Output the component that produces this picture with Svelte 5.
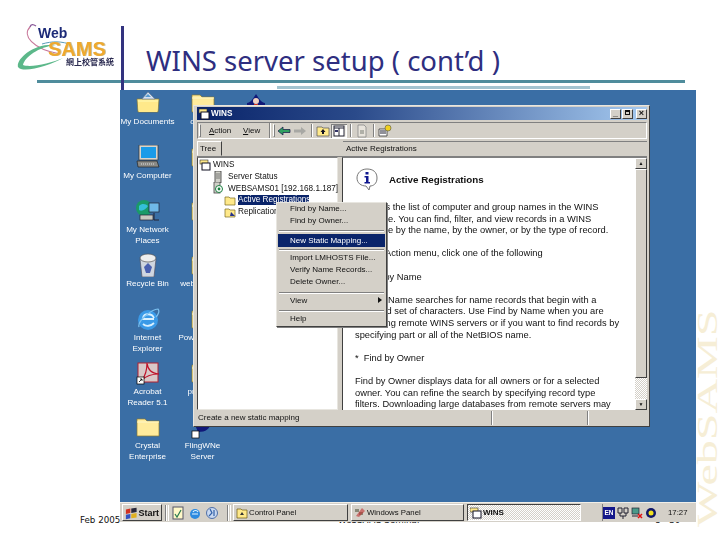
<script lang="ts">
  const columnOne = [
    { icon: 'docs', label: ['My Documents'] },
    { icon: 'computer', label: ['My Computer'] },
    { icon: 'network', label: ['My Network', 'Places'] },
    { icon: 'recycle', label: ['Recycle Bin'] },
    { icon: 'ie', label: ['Internet', 'Explorer'] },
    { icon: 'acrobat', label: ['Acrobat', 'Reader 5.1'] },
    { icon: 'folder', label: ['Crystal', 'Enterprise'] },
  ];
  const columnTwo = [
    { icon: 'folder', label: ['drivers'] },
    { icon: 'folder', label: ['Tools'] },
    { icon: 'folder', label: ['SQL'] },
    { icon: 'folder', label: ['webservices'] },
    { icon: 'folder', label: ['PowerBuilder'] },
    { icon: 'folder', label: ['program'] },
    { icon: 'fling', label: ['FlingWNe', 'Server'] },
  ];

  const bodyLines = [
    'Displays the list of computer and group names in the WINS',
    'database. You can find, filter, and view records in a WINS',
    'database by the name, by the owner, or by the type of record.',
    '',
    'On the Action menu, click one of the following',
    '',
    '*\u00A0\u00A0Find by Name',
    '',
    'Find by Name searches for name records that begin with a',
    'specified set of characters. Use Find by Name when you are',
    'managing remote WINS servers or if you want to find records by',
    'specifying part or all of the NetBIOS name.',
    '',
    '*\u00A0\u00A0Find by Owner',
    '',
    'Find by Owner displays data for all owners or for a selected',
    'owner. You can refine the search by specifying record type',
    'filters. Downloading large databases from remote servers may',
  ];
</script>

{#snippet deskIcon(kind: string)}
  <svg class="desk-svg" viewBox="0 0 24 24" width="24" height="24">
    {#if kind === 'docs'}
      <path d="M1 8h22l-1 13H2z" fill="#fff2a0" stroke="#8a7a30" stroke-width=".7" />
      <path d="M6 8l6-7 7 7z" fill="#d5e2f2" stroke="#6a7a90" stroke-width=".6" />
      <path d="M9 6l3-3 3 3z" fill="#5a9ad0" />
      <path d="M2 11h20l-1 10H3z" fill="#ffe98a" />
    {:else if kind === 'computer'}
      <rect x="3" y="0" width="19" height="15" fill="#d8d4cc" stroke="#333" stroke-width=".7" />
      <rect x="5" y="2" width="15" height="11" fill="#1a9be8" />
      <path d="M1 16h20l2 6H2z" fill="#8a8a86" stroke="#222" stroke-width=".7" />
      <path d="M5 19h13" stroke="#ddd" stroke-width="1.200" stroke-dasharray="1 1" />
    {:else if kind === 'network'}
      <circle cx="8" cy="9" r="8" fill="#1a9a68" />
      <path d="M3 7c3-3 7-2 9 0-2 3-6 6-9 4z" fill="#35c0d8" />
      <rect x="13" y="4" width="10" height="9" fill="#6fb8e8" stroke="#223" stroke-width=".7" />
      <rect x="4" y="16" width="13" height="5" fill="#c8c8c0" stroke="#223" stroke-width=".7" />
      <path d="M18 14v7h5" fill="none" stroke="#223" />
    {:else if kind === 'recycle'}
      <path d="M4 6h16l-2 18H6z" fill="#cfd6e0" stroke="#556" stroke-width=".7" />
      <ellipse cx="12" cy="5" rx="8" ry="4" fill="#eee" stroke="#555" stroke-width=".7" />
      <path d="M8 14l4-4 4 4-2 6h-4z" fill="#4a60b0" />
    {:else if kind === 'ie'}
      <circle cx="12" cy="13" r="10" fill="#3a9ae8" />
      <path d="M6 12h12M7 17c3 3 8 2 11-1M7 11c1-5 9-5 11 0" fill="none" stroke="#d8f0ff" stroke-width="1.800" />
      <path d="M3 20C1 14 16 2 22 2c2 2 0 6-2 8" fill="none" stroke="#7ac0f0" stroke-width="1.200" />
    {:else if kind === 'acrobat'}
      <rect x="2" y="2" width="20" height="19" fill="#d8c8c8" stroke="#b02030" />
      <path d="M6 19c3-4 5-10 5-17 1 7 4 10 12 11-7 0-13 2-17 6z" fill="none" stroke="#c01028" stroke-width="1.200" />
      <rect x="1" y="16" width="7" height="7" fill="#fff" stroke="#000" stroke-width=".7" />
      <path d="M3 21l3-3M4 18h2v2" stroke="#000" fill="none" stroke-width=".8" />
    {:else if kind === 'fling'}
      <path d="M4 10c3 0 5-3 7-5l10 1c-2 8-6 11-14 11z" fill="#101878" />
      <circle cx="13" cy="6" r="3" fill="#e07018" />
      <rect x="1" y="16" width="7" height="7" fill="#fff" stroke="#000" stroke-width=".7" />
    {:else}
      <path d="M1 4h8l2 2h12v15H1z" fill="#ffeb9c" stroke="#8a7a30" stroke-width=".7" />
      <path d="M1 7h22" stroke="#fff7c8" />
    {/if}
  </svg>
{/snippet}

{#snippet winsIcon()}
  <svg viewBox="0 0 12 12" width="12" height="12">
    <rect x="1" y="1" width="8" height="4" fill="#ffe98a" stroke="#333" stroke-width=".6" />
    <rect x="3" y="4" width="8" height="7" fill="#fff" stroke="#112" />
  </svg>
{/snippet}

<div class="slide">
  <header class="head">
    <svg class="logo" viewBox="0 0 120 80" width="120" height="80">
      <path d="M30 27c-8 8 2 22 30 27" fill="none" stroke="#c8789a" stroke-width="1.2" />
      <path d="M30 27c1-3 3-3 6-1" fill="none" stroke="#8a5a9a" stroke-width="1.4" />
      <path d="M18 67c-2-7 14-24 38-22-18 2-31 12-33 20 8 3 28-2 40-7-12 7-40 16-45 9z" fill="#5cb88a" />
      <path d="M42 44c10-3 20-3 30 1" fill="none" stroke="#5a9ab8" stroke-width="1" />
      <text class="logo-web" x="38" y="38">Web</text>
      <text class="logo-sams-shadow" x="49" y="56">SAMS</text>
      <text class="logo-sams" x="48" y="55.500">SAMS</text>
      <text class="logo-zh" x="66" y="64.500">網上校管系統</text>
    </svg>
    <h1>WINS server setup ( cont’d )</h1>
  </header>
  <div class="rule"></div>
  <div class="rule-light"></div>
  <div class="head-bar"></div>

  <main class="desktop">
    <div class="icons">
      <div class="icon-col">
        {#each columnOne as item}
          <div class="desk-icon">
            {@render deskIcon(item.icon)}
            <span class="desk-label">{#each item.label as line}<span>{line}</span>{/each}</span>
          </div>
        {/each}
      </div>
      <div class="icon-col">
        {#each columnTwo as item}
          <div class="desk-icon">
            {@render deskIcon(item.icon)}
            <span class="desk-label">{#each item.label as line}<span>{line}</span>{/each}</span>
          </div>
        {/each}
      </div>
      <div class="icon-col third">
        <div class="desk-icon">
          <svg class="desk-svg" viewBox="0 0 24 24" width="24" height="24">
            <path d="M3 12c3 0 6-4 9-9 3 5 6 9 9 9v4H3z" fill="#101878" />
            <circle cx="12" cy="10" r="3" fill="#f0d0c0" />
            <path d="M10 13h4v3h-4z" fill="#d03020" />
          </svg>
        </div>
      </div>
    </div>

    <section class="window">
      <div class="titlebar">
        {@render winsIcon()}
        <span class="title-text">WINS</span>
        <div class="caption-btns">
          <span class="cap-btn">_</span>
          <span class="cap-btn square"></span>
          <span class="cap-btn close">×</span>
        </div>
      </div>

      <div class="toolbar">
        <div class="grip"></div>
        <span class="menu-item action"><u>A</u>ction</span>
        <span class="menu-item"><u>V</u>iew</span>
        <div class="band-sep"></div>
        <div class="grip second"></div>
        <svg class="tool" viewBox="0 0 14 14" width="14" height="14">
          <path d="M1 7l5-4v2.500h7v3H6V11z" fill="#2fa060" stroke="#114" stroke-width=".7" />
        </svg>
        <svg class="tool" viewBox="0 0 14 14" width="14" height="14">
          <path d="M13 7L8 3v2.500H1v3h7V11z" fill="#a8a8a4" />
        </svg>
        <div class="tool-sep"></div>
        <svg class="tool" viewBox="0 0 14 14" width="14" height="14">
          <path d="M1 3h5l1 1h6v8H1z" fill="#ffe98a" stroke="#555" stroke-width=".7" />
          <path d="M7 5l2.500 3H8v2H6V8H4.500z" fill="#112" />
        </svg>
        <svg class="tool pressed" viewBox="0 0 14 14" width="14" height="14">
          <rect x="2" y="2" width="10" height="10" fill="#fff" stroke="#223" />
          <path d="M2 4h10M7 4v8" stroke="#223" />
          <path d="M3 6h3v2H3z" fill="#336" />
        </svg>
        <div class="tool-sep"></div>
        <svg class="tool" viewBox="0 0 14 14" width="14" height="14">
          <path d="M3 1h6l2 2v10H3z" fill="#e8e4dc" stroke="#888" stroke-width=".8" />
          <path d="M5 6h4v4H5z" fill="#b0b0a8" />
        </svg>
        <div class="tool-sep"></div>
        <svg class="tool" viewBox="0 0 14 14" width="14" height="14">
          <path d="M1 5h8v7H1z" fill="#fff" stroke="#333" stroke-width=".8" />
          <path d="M2 7h6M2 9h6" stroke="#223" />
          <circle cx="10" cy="4" r="3" fill="#f0d020" stroke="#554" stroke-width=".6" />
        </svg>
      </div>

      <div class="tabs">
        <div class="tree-tab"><span>Tree</span></div>
        <div class="list-tab">Active Registrations</div>
      </div>

      <div class="panes">
        <div class="tree">
          <div class="tree-row lvl0">
            {@render winsIcon()}
            <span>WINS</span>
          </div>
          <div class="tree-row lvl1">
            <svg viewBox="0 0 12 12" width="12" height="12">
              <rect x="3" y="0" width="6" height="12" fill="#d0d0c8" stroke="#333" stroke-width=".8" />
              <path d="M4 3h4M4 5h4M4 7h4" stroke="#555" stroke-width=".7" />
            </svg>
            <span>Server Status</span>
          </div>
          <div class="tree-row lvl1">
            <svg viewBox="0 0 12 12" width="12" height="12">
              <rect x="2" y="0" width="6" height="11" fill="#d0d0c8" stroke="#444" stroke-width=".8" />
              <circle cx="7" cy="7" r="3.500" fill="#fff" stroke="#1a8040" />
              <circle cx="7" cy="7" r="1.400" fill="#1a8040" />
            </svg>
            <span>WEBSAMS01 [192.168.1.187]</span>
          </div>
          <div class="tree-row lvl2">
            <svg viewBox="0 0 12 12" width="12" height="12">
              <path d="M1 3h4l1 1h5v7H1z" fill="#ffe98a" stroke="#7a6a20" stroke-width=".7" />
            </svg>
            <span class="selected">Active Registrations</span>
          </div>
          <div class="tree-row lvl2">
            <svg viewBox="0 0 12 12" width="12" height="12">
              <path d="M1 3h4l1 1h5v7H1z" fill="#ffe98a" stroke="#7a6a20" stroke-width=".7" />
              <path d="M7 6l4 4H6z" fill="#24308a" />
            </svg>
            <span>Replication</span>
          </div>
        </div>

        <div class="content">
          <div class="content-body">
            <div class="intro">
              <svg viewBox="0 0 24 24" width="24" height="24">
                <path d="M12 2c6 0 10 3 10 9s-4 8-7 8l-1 4-3-4C6 19 2 16 2 11s4-9 10-9z" fill="#fff" stroke="#777" />
                <rect x="10.500" y="5" width="3" height="2.500" fill="#101890" />
                <path d="M9.500 9h4v6h1.500v1.500H9.500V15H11v-4.500H9.500z" fill="#101890" />
              </svg>
              <h2>Active Registrations</h2>
            </div>
            <div class="copy">
              {#each bodyLines as line}
                <div class="copy-line">{line}</div>
              {/each}
            </div>
          </div>
          <div class="scrollbar">
            <span class="sb-btn">▲</span>
            <span class="sb-thumb"></span>
            <span class="sb-track"></span>
            <span class="sb-btn">▼</span>
          </div>
        </div>
      </div>

      <div class="statusbar">
        <span class="st-main">Create a new static mapping</span>
        <span class="st-mid"></span>
        <span class="st-end"></span>
      </div>

      <div class="context-menu">
        <div class="mi">Find by Name...</div>
        <div class="mi">Find by Owner...</div>
        <div class="m-sep first"></div>
        <div class="mi active">New Static Mapping...</div>
        <div class="m-sep"></div>
        <div class="mi">Import LMHOSTS File...</div>
        <div class="mi">Verify Name Records...</div>
        <div class="mi">Delete Owner...</div>
        <div class="m-sep"></div>
        <div class="mi arrow">View<span class="caret"></span></div>
        <div class="m-sep"></div>
        <div class="mi">Help</div>
      </div>
    </section>

    <footer class="taskbar">
      <button class="start" type="button">
        <svg viewBox="0 0 14 14" width="14" height="14">
          <path d="M1 3l5-1v5l-5 1z" fill="#d03020" />
          <path d="M7 2l6-1v5l-6 1z" fill="#28283a" />
          <path d="M1 9l5-1v5l-5 1z" fill="#3050c0" />
          <path d="M7 8l6-1v5l-6 1z" fill="#e0b020" />
        </svg>
        Start
      </button>
      <div class="task-sep"></div>
      <div class="quick">
        <svg viewBox="0 0 14 14" width="14" height="14">
          <rect x="2" y="1" width="10" height="12" fill="#fff8c8" stroke="#556" />
          <path d="M4 8l2 3 4-7" fill="none" stroke="#2a7a50" stroke-width="1.2" />
        </svg>
        <svg viewBox="0 0 14 14" width="14" height="14">
          <circle cx="7" cy="8" r="5" fill="#2c8ae0" />
          <path d="M4 8h6M5 6c1-2 4-2 5 0" fill="none" stroke="#e0f4ff" stroke-width="1.100" />
        </svg>
        <svg viewBox="0 0 14 14" width="14" height="14">
          <circle cx="7" cy="7" r="5.500" fill="#c8d8f0" stroke="#5070a8" />
          <path d="M5 3l2 4-3 3M9 4v6" fill="none" stroke="#3060a8" stroke-width="1.200" />
        </svg>
      </div>
      <div class="task-sep"></div>
      <button class="task cp" type="button">
        <svg viewBox="0 0 12 12" width="12" height="12">
          <path d="M1 2h4l1 1h5v8H1z" fill="#ffe98a" stroke="#6a5a10" stroke-width=".7" />
          <path d="M4 8l2-3 2 3z" fill="#333" />
        </svg>
        Control Panel
      </button>
      <button class="task wp" type="button">
        <svg viewBox="0 0 12 12" width="12" height="12">
          <path d="M1 2h4v3H1zM5 5h4v3H5z" fill="#887" />
          <path d="M8 1l3 3-6 6-3-1z" fill="#c03030" opacity=".6" />
        </svg>
        Windows Panel
      </button>
      <button class="task wins" type="button">
        <svg viewBox="0 0 12 12" width="12" height="12">
          <rect x="0" y="1" width="8" height="4" fill="#ffe98a" stroke="#333" stroke-width=".6" />
          <rect x="3" y="4" width="8" height="7" fill="#fff" stroke="#112" />
        </svg>
        WINS
      </button>
      <div class="tray">
        <span class="lang">EN</span>
        <svg viewBox="0 0 12 12" width="12" height="12">
          <path d="M1 1h4v5H1zM7 1h4v5H7zM3 6v3h6V6M6 9v3" fill="none" stroke="#223" />
        </svg>
        <svg viewBox="0 0 12 12" width="12" height="12">
          <rect x="1" y="1" width="7" height="6" fill="#4a9a8a" stroke="#223" stroke-width=".7" />
          <path d="M1 9h6" stroke="#223" />
          <path d="M7 7l4 4M11 7l-4 4" stroke="#e01010" stroke-width="1.500" />
        </svg>
        <svg viewBox="0 0 12 12" width="12" height="12">
          <circle cx="6" cy="6" r="5" fill="#101868" />
          <circle cx="6" cy="6" r="2.500" fill="#f0e020" />
        </svg>
        <span class="clock">17:27</span>
      </div>
    </footer>
  </main>

  <div class="slide-foot">
    <span class="date">Feb 2005</span>
    <span class="seminar">WebSAMS Seminar</span>
    <span class="page">8 - 30</span>
  </div>

  <div class="watermark">WebSAMS</div>
</div>

<style>
  :global(body) {
    margin: 0;
    background: #fff;
  }

  .slide {
    position: relative;
    width: 720px;
    height: 540px;
    overflow: hidden;
    background: #fff;
    font-family: "Liberation Sans", Arial, sans-serif;
  }

  .head {
    display: flex;
    height: 80px;
  }

  .logo {
    flex-shrink: 0;
    filter: blur(0.3px);
  }

  .logo-web {
    font: bold 14px "Liberation Sans", sans-serif;
    fill: #1c2a78;
  }

  .logo-sams {
    font: bold 20px "Liberation Sans", sans-serif;
    fill: #eea92e;
  }

  .logo-sams-shadow {
    font: bold 20px "Liberation Sans", sans-serif;
    fill: #c9c4a8;
  }

  .logo-zh {
    font: bold 8px "Noto Sans CJK TC", sans-serif;
    fill: #2a2a50;
  }

  h1 {
    margin: 46px 0 0 26px;
    font: 400 27.500px/30px "Noto Sans", sans-serif;
    color: #2e2e80;
    white-space: nowrap;
  }

  .rule {
    height: 3px;
    width: 648px;
    margin-left: 37px;
    background: #4f8c9c;
  }

  .rule-light {
    height: 3px;
    width: 313px;
    margin: 3px 0 1px 277px;
    background: #a3c4d0;
  }

  .head-bar {
    position: absolute;
    left: 121px;
    top: 26px;
    width: 3px;
    height: 64px;
    background: #33337f;
  }

  .desktop {
    position: relative;
    z-index: 1;
    display: flex;
    flex-direction: column;
    width: 576px;
    height: 432px;
    margin-left: 120px;
    background: #3a6ea5;
    overflow: hidden;
  }

  .icons {
    flex: 1;
    display: flex;
    padding-top: 1px;
    filter: blur(0.25px);
  }

  .icon-col {
    display: flex;
    flex-direction: column;
    width: 55px;
  }

  .icon-col.third {
    margin-left: -2px;
  }

  .desk-icon {
    display: flex;
    flex-direction: column;
    align-items: center;
    height: 54px;
    color: #fff;
  }

  .desk-svg {
    flex-shrink: 0;
  }

  .desk-label {
    display: flex;
    flex-direction: column;
    align-items: center;
    margin-top: 2px;
    font-size: 8.100px;
    line-height: 10.500px;
    white-space: nowrap;
  }

  .window {
    position: absolute;
    left: 73px;
    top: 15px;
    width: 457px;
    height: 322px;
    box-sizing: border-box;
    display: flex;
    flex-direction: column;
    padding: 1px 2px 0 3px;
    background: #d4d0c8;
    border: 1px solid;
    border-color: #e8e6e0 #404040 #404040 #e8e6e0;
    font-size: 8px;
    color: #111;
    filter: blur(0.3px);
  }

  .titlebar {
    display: flex;
    align-items: center;
    gap: 1px;
    height: 13px;
    flex-shrink: 0;
    padding: 0 0 0 1px;
    background: linear-gradient(90deg, #0a246a 0%, #2a4a8a 35%, #a6caf0 100%);
    color: #fff;
    font-weight: bold;
    font-size: 8.200px;
  }

  .caption-btns {
    display: flex;
    margin-left: auto;
  }

  .cap-btn {
    width: 11px;
    height: 10px;
    margin-left: 1px;
    box-sizing: border-box;
    background: #d4d0c8;
    border: 1px solid;
    border-color: #fff #404040 #404040 #fff;
    color: #111;
    font-size: 9px;
    line-height: 6px;
    text-align: center;
  }

  .cap-btn.square::after {
    content: "";
    display: block;
    width: 5px;
    height: 5px;
    margin: 0 auto;
    border: 1px solid #111;
    border-top-width: 2px;
    box-sizing: border-box;
  }

  .cap-btn.close {
    margin-left: 3px;
    font-weight: bold;
    line-height: 7px;
  }

  .toolbar {
    display: flex;
    align-items: center;
    height: 17px;
    flex-shrink: 0;
    margin-top: 2px;
    padding-left: 1px;
    border: 1px solid;
    border-color: #808080 #fff #fff #808080;
    box-sizing: border-box;
  }

  .grip {
    width: 2px;
    height: 13px;
    margin-right: 6px;
    border: 1px solid;
    border-color: #fff #808080 #808080 #fff;
    box-sizing: border-box;
  }

  .grip.second {
    margin-right: 1px;
  }

  .menu-item {
    margin-left: 2px;
    width: 26px;
  }

  .menu-item.action {
    margin-right: 6px;
  }

  .band-sep {
    width: 1px;
    height: 15px;
    margin-right: 3px;
    background: #808080;
    box-shadow: 1px 0 #fff;
  }

  .tool {
    padding: 0 1px;
    flex-shrink: 0;
  }

  .tool.pressed {
    background: #f2f0ea;
    box-shadow: inset 1px 1px #808080, inset -1px -1px #fff;
  }

  .tool-sep {
    width: 1px;
    height: 13px;
    margin: 0 3px;
    background: #808080;
    box-shadow: 1px 0 #fff;
  }

  .tabs {
    display: flex;
    height: 16px;
    flex-shrink: 0;
    margin-top: 2px;
  }

  .tree-tab {
    width: 146px;
    flex-shrink: 0;
    box-shadow: inset 0 -1px #808080;
  }

  .tree-tab span {
    display: block;
    width: 25px;
    height: 15px;
    box-sizing: border-box;
    padding: 1px 0 0 2px;
    border: 1px solid;
    border-color: #fff #404040 #d4d0c8 #fff;
    line-height: 12px;
  }

  .list-tab {
    flex: 1;
    padding: 1px 0 0 3px;
    border-top: 1px solid #808080;
    border-bottom: 1px solid #808080;
    line-height: 12px;
  }

  .panes {
    flex: 1;
    display: flex;
    gap: 4px;
    min-height: 0;
  }

  .tree {
    width: 141px;
    flex-shrink: 0;
    padding: 1px 0 0 1px;
    box-sizing: border-box;
    background: #fff;
    border: 1px solid;
    border-color: #808080 #e8e6e0 #e8e6e0 #404040;
    font-size: 8.200px;
  }

  .tree-row {
    display: flex;
    align-items: center;
    gap: 2px;
    height: 11.700px;
    white-space: nowrap;
  }

  .tree-row svg {
    flex-shrink: 0;
  }

  .lvl1 {
    padding-left: 13px;
    gap: 4px;
  }

  .lvl2 {
    padding-left: 25px;
  }

  .selected {
    width: 71px;
    height: 10px;
    line-height: 10px;
    overflow: hidden;
    background: #0a246a;
    color: #fff;
  }

  .content {
    flex: 1;
    display: flex;
    min-width: 0;
    background: #fff;
    border-left: 1px solid #404040;
    border-top: 1px solid #808080;
    font-size: 9.300px;
  }

  .content-body {
    flex: 1;
    min-width: 0;
    padding-left: 12px;
    overflow: hidden;
  }

  .intro {
    display: flex;
    align-items: center;
    gap: 10px;
    height: 42px;
    padding-bottom: 2px;
  }

  .intro h2 {
    margin: 0;
    font: bold 9.800px "Liberation Sans", sans-serif;
    color: #111;
  }

  .copy-line {
    height: 11.600px;
    line-height: 11.600px;
    white-space: nowrap;
  }

  .scrollbar {
    display: flex;
    flex-direction: column;
    width: 12px;
    flex-shrink: 0;
    background: #d4d0c8;
  }

  .sb-btn {
    height: 11px;
    box-sizing: border-box;
    border: 1px solid;
    border-color: #fff #404040 #404040 #fff;
    background: #d4d0c8;
    font-size: 5px;
    line-height: 8px;
    text-align: center;
    color: #111;
  }

  .sb-thumb {
    flex: 1;
    border: 1px solid;
    border-color: #fff #404040 #404040 #fff;
  }

  .sb-track {
    height: 21px;
    background: repeating-conic-gradient(#fff 0 25%, #d4d0c8 0 50%) 0 0 / 2px 2px;
  }

  .statusbar {
    display: flex;
    height: 16px;
    flex-shrink: 0;
    align-items: center;
  }

  .statusbar span {
    height: 14px;
    box-sizing: border-box;
    line-height: 13px;
    padding-left: 1px;
    border-right: 1px solid #808080;
    box-shadow: 1px 0 #fff;
  }

  .st-main {
    width: 295px;
  }

  .st-mid {
    width: 96px;
  }

  .st-end {
    flex: 1;
    border-right: none !important;
    box-shadow: none !important;
  }

  .context-menu {
    position: absolute;
    left: 82px;
    top: 96px;
    width: 111px;
    height: 125px;
    box-sizing: border-box;
    padding: 1px 1px 0;
    background: #d4d0c8;
    border: 1px solid;
    border-color: #e8e6e0 #404040 #404040 #e8e6e0;
    box-shadow: 1px 1px #808080;
  }

  .mi {
    position: relative;
    height: 12px;
    line-height: 10px;
    padding-left: 12px;
    white-space: nowrap;
  }

  .mi.active {
    height: 13px;
    line-height: 13px;
    background: #0a246a;
    color: #fff;
  }

  .m-sep {
    height: 1px;
    margin: 2.500px 1px 3px;
    background: #808080;
    box-shadow: 0 1px #fff;
  }

  .m-sep.first {
    margin-top: 1.500px;
  }

  .caret {
    position: absolute;
    right: 3px;
    top: 1px;
    border-left: 4px solid #111;
    border-top: 3px solid transparent;
    border-bottom: 3px solid transparent;
  }

  .taskbar {
    display: flex;
    align-items: center;
    height: 20px;
    flex-shrink: 0;
    padding: 1px 0 0 2px;
    box-sizing: border-box;
    background: #d4d0c8;
    box-shadow: inset 0 1px #f0eee8;
    font-size: 7.800px;
    color: #111;
    filter: blur(0.25px);
  }

  button {
    display: flex;
    align-items: center;
    gap: 1px;
    height: 17px;
    box-sizing: border-box;
    padding: 0 2px;
    margin: 0;
    background: #d4d0c8;
    border: 1px solid;
    border-color: #fff #404040 #404040 #fff;
    font: inherit;
    color: inherit;
    flex-shrink: 0;
  }

  .start {
    width: 40px;
    font-weight: bold;
    font-size: 9px;
  }

  .task-sep {
    width: 1px;
    height: 16px;
    margin: 0 2px 0 3px;
    background: #808080;
    box-shadow: 1px 0 #fff, 3px 0 #fff;
  }

  .quick {
    display: flex;
    gap: 3px;
    width: 56px;
    padding-left: 3px;
    box-sizing: border-box;
  }

  .task {
    width: 115px;
    margin-right: 3px;
  }

  .cp {
    margin-left: 3px;
  }

  .wp {
    width: 113px;
  }

  .wins {
    width: 114px;
    font-size: 8px;
    font-weight: bold;
    border-color: #404040 #fff #fff #404040;
    background: repeating-conic-gradient(#fff 0 25%, #d4d0c8 0 50%) 0 0 / 2px 2px;
  }

  .tray {
    display: flex;
    align-items: center;
    gap: 2px;
    height: 17px;
    flex: 1;
    margin-left: 18px;
    border-left: 1px solid #808080;
  }

  .lang {
    width: 12px;
    height: 12px;
    background: #14188a;
    color: #fff;
    font-size: 6.500px;
    font-weight: bold;
    line-height: 12px;
    text-align: center;
  }

  .clock {
    margin-left: 9px;
  }

  .slide-foot {
    display: grid;
    grid-template-columns: 120px 516px 60px;
    margin-top: -8px;
    font: 8.700px/12px "DejaVu Sans", sans-serif;
    color: #111;
  }

  .date {
    padding-left: 80px;
    white-space: nowrap;
  }

  .seminar {
    padding-left: 218px;
  }

  .page {
    margin-left: 19px;
  }

  .watermark {
    position: absolute;
    left: 696px;
    top: 527px;
    transform: rotate(-90deg) scaleX(1.6);
    transform-origin: 0 0;
    font: 30px/22px "Liberation Serif", serif;
    color: #f6eed6;
    white-space: nowrap;
  }
</style>
